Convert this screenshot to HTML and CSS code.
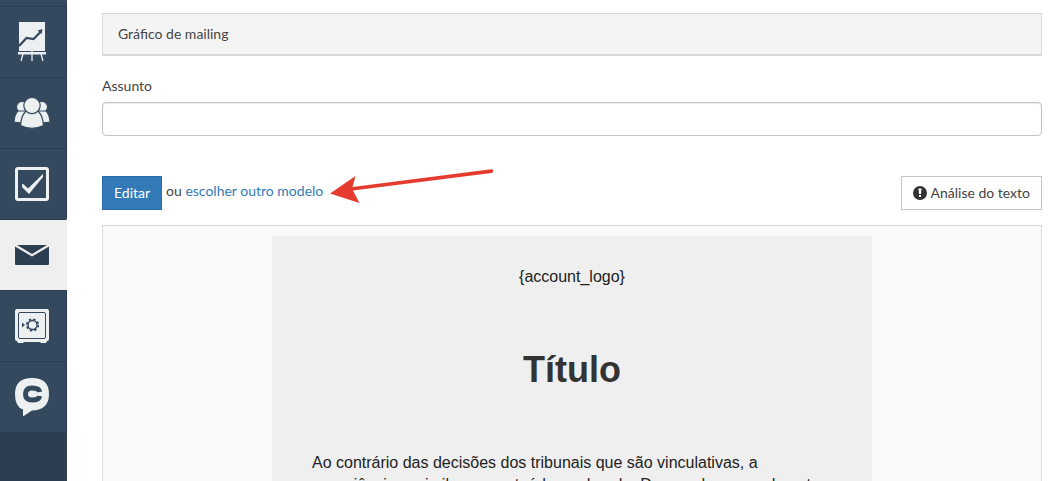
FILE: index.html
```html
<!DOCTYPE html>
<html lang="pt">
<head>
<meta charset="utf-8">
<title>Gráfico de mailing</title>
<link rel="stylesheet" href="styles.css">
</head>
<body>
<div class="app">
  <nav class="sidebar" aria-label="Menu">
    <a class="nav-item" href="#" aria-label="Relatórios">
      <svg class="nav-icon" width="36" height="40" viewBox="0 0 36 40">
        <path fill="#ecf0f1" d="M5 0h26v29H5zM4 30h28v2.500H4z"/>
        <path fill="none" stroke="#ecf0f1" stroke-width="1.300" d="M9 32l-2 7M18 29v10M27 32l2 7"/>
        <path fill="none" stroke="#34495e" stroke-width="2.200" d="M5 24l7.500-8 7 1 7-7"/>
        <path fill="#34495e" d="M28.500 7l-1 5-4-3.500z"/>
      </svg>
    </a>
    <a class="nav-item" href="#" aria-label="Clientes">
      <svg class="nav-icon" width="36" height="32" viewBox="0 0 36 32">
        <g fill="#ecf0f1" stroke="#34495e" stroke-width="1.200">
          <circle cx="8" cy="10" r="5.500"/><circle cx="28" cy="10" r="5.500"/>
          <path d="M4 14h8v12.500L0 25q.500-8 4-11zM32 14h-8v12.500L36 25q-.500-8-4-11z"/>
          <path d="M11.500 14.500h13q4.500 5 5 14-11.500 5.500-23 0 .500-9 5-14z"/>
          <circle cx="18" cy="8.500" r="8.200"/>
        </g>
      </svg>
    </a>
    <a class="nav-item" href="#" aria-label="Tarefas">
      <svg class="nav-icon" width="36" height="34" viewBox="0 0 36 34">
        <rect x="2.500" y="1.500" width="31" height="31" rx="1.500" fill="none" stroke="#ecf0f1" stroke-width="3"/>
        <path fill="#ecf0f1" d="M8 17l1.500.300 4.500 4.200 15-14.500v3L15 27l-7-7z"/>
      </svg>
    </a>
    <a class="nav-item nav-item-active" href="#" aria-label="Mailing">
      <svg class="nav-icon" width="36" height="20" viewBox="0 0 36 20">
        <path fill="#2c3e50" d="M3 0h30l-15 9zM1 1.500l17 10 17-10V19q0 1-1 1H2q-1 0-1-1z"/>
      </svg>
    </a>
    <a class="nav-item" href="#" aria-label="Finanças">
      <svg class="nav-icon" width="36" height="34" viewBox="0 0 36 34">
        <path fill="#ecf0f1" d="M3 0h30q2 0 2 2v28q0 2-2 2l-1 2h-5l-1-1H10l-1 1H4l-1-2q-2 0-2-2V2q0-2 2-2z"/>
        <rect x="4.500" y="3.500" width="27" height="26" rx="1.500" fill="none" stroke="#34495e" stroke-width="1"/>
        <path fill="#34495e" d="M8 13.500l3 2.500-3 2.500z"/>
        <circle cx="18.500" cy="16" r="4.500" fill="none" stroke="#34495e" stroke-width="1.500"/>
        <circle cx="18.500" cy="16" r="5.800" fill="none" stroke="#34495e" stroke-width="1.600" stroke-dasharray="2.500 2.055"/>
      </svg>
    </a>
    <a class="nav-item" href="#" aria-label="Chat">
      <svg class="nav-icon" width="36" height="38" viewBox="0 0 36 38">
        <path fill="#ecf0f1" d="M18 0q17 0 17 16t-17 16.500L9 38.500v-7Q1 29 1 16 1 0 18 0z"/>
        <path fill="none" stroke="#34495e" stroke-width="5" d="M25.500 14q-.300-4-7.500-4-6.500 0-6.500 6t6.500 6q7.200 0 7.500-4"/>
      </svg>
    </a>
  </nav>

  <main class="main">
    <div class="panel-title">Gráfico de mailing</div>
    <label class="label" for="subject">Assunto</label>
    <input class="input" id="subject" type="text">

    <div class="toolbar">
      <button class="btn btn-primary" type="button">Editar</button>
      <span class="choose">ou <a class="link" href="#">escolher outro modelo</a>
        <svg class="arrow" width="164" height="36" viewBox="0 0 164 36" aria-hidden="true">
          <path fill="#e63c30" d="M0 24.500L25.500 7l-3 11L161 .200q2-.200 2.300 1.500.200 1.900-1.800 2.200L23 21.500l6.500 12.500z"/>
        </svg>
      </span>
      <button class="btn btn-default" type="button">
        <svg class="btn-icon" width="14" height="14" viewBox="0 0 14 14">
          <circle cx="7" cy="7" r="7" fill="#333"/>
          <path fill="#fff" d="M5.500 2.500h3l-.500 5.500H6zM6 9h2v2H6z"/>
        </svg>
        Análise do texto
      </button>
    </div>

    <section class="preview">
      <article class="letter">
        <p class="letter-logo">{account_logo}</p>
        <h1 class="letter-title">Título</h1>
        <p class="letter-text">Ao contrário das decisões dos tribunais que são vinculativas, a consciência assimila um conteúdo moderado. De acordo com o de outro</p>
      </article>
    </section>
  </main>
</div>
</body>
</html>
```
FILE: styles.css
```css
* { box-sizing: border-box; }

body {
  margin: 0;
  height: 100vh;
  overflow: hidden;
  background: #fff;
  color: #444;
  font: 14px/20px Lato, "Open Sans", sans-serif;
}

.app { display: flex; height: 100%; }

.sidebar {
  flex: none;
  width: 67px;
  padding-top: 6px;
  background: linear-gradient(#34495e 6px, #2c3e50 6px);
}

.nav-item {
  display: flex;
  align-items: center;
  justify-content: center;
  height: 71px;
  padding-right: 3px;
  border-top: 1px solid #2b3e51;
  border-right: 1px solid #2b3e51;
  background: #34495e;
}

.nav-item-active {
  background: #efefef;
  border-color: #2b3e51 #efefef;
}

.nav-icon { display: block; }

.main {
  flex: 1;
  min-width: 0;
  padding: 13px 22px 0 35px;
}

.panel-title {
  padding: 10px 15px;
  border: 1px solid #d9d9d9;
  border-bottom-width: 2px;
  background: #f4f4f4;
}

.label {
  display: block;
  margin: 20px 0 6px;
}

.input {
  display: block;
  width: 100%;
  height: 34px;
  padding: 6px 12px;
  border: 1px solid #c4c4c4;
  border-radius: 4px;
  box-shadow: inset 0 1px 1px rgba(0, 0, 0, .075);
  font: inherit;
}

.toolbar {
  display: flex;
  gap: 4px;
  margin: 40px 0 15px;
}

.btn {
  height: 34px;
  padding: 0 11px;
  border: 1px solid #c4c4c4;
  font: inherit;
}

.btn-primary {
  border-color: #2a6aa6;
  background: #337ab7;
  color: #fff;
}

.btn-default {
  display: flex;
  align-items: center;
  gap: 4px;
  margin-left: auto;
  background: #fff;
  color: #444;
}

.choose {
  position: relative;
  padding-top: 5px;
}

.link { color: #337ab7; text-decoration: none; }

.arrow {
  position: absolute;
  left: 100%;
  top: -7px;
  margin-left: 7px;
}

.preview {
  padding: 10px;
  border: 1px solid #d9d9d9;
  background: #fafafa;
}

.letter {
  max-width: 600px;
  min-height: 300px;
  margin: 0 auto;
  padding: 30px 40px;
  background: #efefef;
  color: #222;
  font: 16px/22px "Liberation Sans", Arial, sans-serif;
}

.letter-logo { margin: 0; text-align: center; }

.letter-title {
  margin: 60px 0 60px;
  color: #333;
  font-size: 36px;
  line-height: 44px;
  text-align: center;
}

.letter-text { margin: 0; }
```
